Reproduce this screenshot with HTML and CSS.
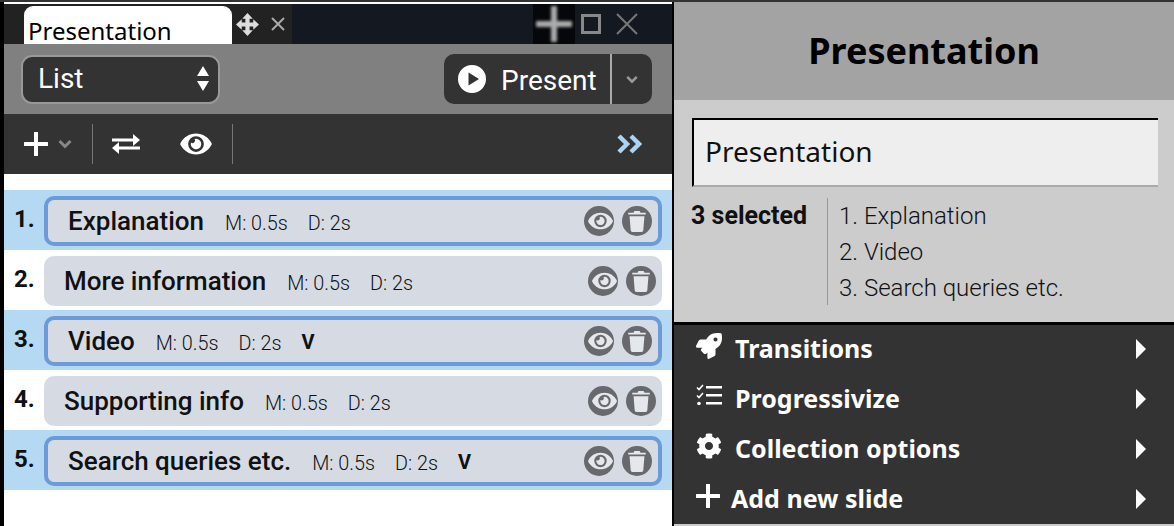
FILE: index.html
```html
<!DOCTYPE html>
<html><head><title>Presentation</title><meta charset="utf-8"><link rel="stylesheet" href="styles.css"></head><body>
<svg class="defs" width="0" height="0">
	<symbol id="eye" viewBox="0 0 576 512"><path d="M572.52 241.4C518.29 135.59 410.93 64 288 64S57.68 135.64 3.48 241.41a32.35 32.35 0 0 0 0 29.19C57.71 376.41 165.07 448 288 448s230.32-71.64 284.52-177.41a32.35 32.35 0 0 0 0-29.19zM288 400a144 144 0 1 1 144-144 143.93 143.93 0 0 1-144 144zm0-240a95.31 95.31 0 0 0-25.31 3.79 47.85 47.85 0 0 1-66.9 66.9A95.78 95.78 0 1 0 288 160z"/></symbol>
	<symbol id="trash" viewBox="0 0 20 24"><path d="M7 0h6l1 2h6v2H0V2h6zM1.500 6h17l-1.300 16a2 2 0 0 1-2 2H4.800a2 2 0 0 1-2-2z"/></symbol>
	<symbol id="chev" viewBox="0 0 14 10"><path d="M1.500 2 7 7.500 12.500 2" fill="none" stroke="currentColor" stroke-width="3"/></symbol>
	<symbol id="plus" viewBox="0 0 24 24"><path d="M10 1a2 2 0 0 1 4 0v9h9a2 2 0 0 1 0 4h-9v9a2 2 0 0 1-4 0v-9H1a2 2 0 0 1 0-4h9z"/></symbol>
	<symbol id="tri" viewBox="0 0 10 20"><path d="M0 0 10 10 0 20z"/></symbol>
</svg>
<div class="app">
	<section class="left">
		<div class="tabbar">
			<div class="tabgroup">
				<div class="tab">Presentation</div>
				<svg class="move" viewBox="0 0 24 24"><path d="M12 0l5.500 6H14.200v3.800H18V6.500l6 5.500-6 5.500v-3.300h-3.800V18h3.300L12 24l-5.500-6h3.300v-3.800H6v3.300L0 12l6-5.500v3.300h3.800V6H6.500z"/></svg>
				<svg class="tabx" viewBox="0 0 14 14"><path d="M1 1l12 12M13 1 1 13" stroke-width="2"/></svg>
			</div>
			<div class="winctl">
				<div class="winplus"><svg><use href="#plus"/></svg></div>
				<div class="winsq"></div>
				<svg class="winx" viewBox="0 0 22 22"><path d="M1 1l20 20M21 1 1 21" stroke-width="2"/></svg>
			</div>
		</div>
		<div class="bar-gray">
			<div class="select">
				<span>List</span>
				<svg viewBox="0 0 12 26"><path d="M6 0l6 10H0zM0 15h12L6 25z"/></svg>
			</div>
			<div class="present">
				<div class="present-main">
					<svg viewBox="0 0 28 28"><path fill-rule="evenodd" d="M14 0a14 14 0 1 1 0 28 14 14 0 0 1 0-28zM10.500 7.500v13L21 14z"/></svg>
					<span>Present</span>
				</div>
				<div class="present-more"><svg><use href="#chev"/></svg></div>
			</div>
		</div>
		<div class="bar-dark">
			<svg class="i-plus"><use href="#plus"/></svg>
			<svg class="i-chev"><use href="#chev"/></svg>
			<div class="sep"></div>
			<svg class="i-swap" viewBox="0 0 28 20"><path d="M0 4.500h21V0l7 6-7 6V7.500H0zM28 12.500H7V8l-7 6 7 6v-4.500h21z"/></svg>
			<svg class="i-eye"><use href="#eye"/></svg>
			<div class="sep"></div>
			<svg class="i-dbl" viewBox="0 0 25 20"><path d="M2 2l8 8-8 8M14 2l8 8-8 8"/></svg>
		</div>
		<div class="list">
			<div class="row sel">
				<div class="num">1.</div>
				<div class="item"><b>Explanation</b><span>M: 0.5s</span><span>D: 2s</span>
					<div class="acts"><i><svg class="e"><use href="#eye"/></svg></i><i><svg class="t"><use href="#trash"/></svg></i></div></div>
			</div>
			<div class="row">
				<div class="num">2.</div>
				<div class="item"><b>More information</b><span>M: 0.5s</span><span>D: 2s</span>
					<div class="acts"><i><svg class="e"><use href="#eye"/></svg></i><i><svg class="t"><use href="#trash"/></svg></i></div></div>
			</div>
			<div class="row sel">
				<div class="num">3.</div>
				<div class="item"><b>Video</b><span>M: 0.5s</span><span>D: 2s</span><em>V</em>
					<div class="acts"><i><svg class="e"><use href="#eye"/></svg></i><i><svg class="t"><use href="#trash"/></svg></i></div></div>
			</div>
			<div class="row">
				<div class="num">4.</div>
				<div class="item"><b>Supporting info</b><span>M: 0.5s</span><span>D: 2s</span>
					<div class="acts"><i><svg class="e"><use href="#eye"/></svg></i><i><svg class="t"><use href="#trash"/></svg></i></div></div>
			</div>
			<div class="row sel">
				<div class="num">5.</div>
				<div class="item"><b>Search queries etc.</b><span>M: 0.5s</span><span>D: 2s</span><em>V</em>
					<div class="acts"><i><svg class="e"><use href="#eye"/></svg></i><i><svg class="t"><use href="#trash"/></svg></i></div></div>
			</div>
		</div>
	</section>
	<aside class="right">
		<h1>Presentation</h1>
		<div class="props">
			<div class="name">Presentation</div>
			<div class="selinfo">
				<div class="count">3 selected</div>
				<ol>
					<li>1. Explanation</li>
					<li>2. Video</li>
					<li>3. Search queries etc.</li>
				</ol>
			</div>
		</div>
		<div class="menu">
			<div class="mrow">
				<svg class="mi" viewBox="0 0 512 512"><path d="M505.12 19.09c-1.19-5.53-6.66-11-12.21-12.18C460.72 0 435.51 0 410.41 0 307.18 0 245.27 55.2 199.05 128H94.84c-16.35.02-35.56 11.88-42.89 26.48L2.52 253.3A28.4 28.4 0 0 0 0 264a24 24 0 0 0 24 24h103.82l-22.48 22.47c-11.36 11.36-13 32.26 0 45.25l50.91 50.91c11.16 11.19 32.16 13.16 45.28 0l22.47-22.47V488a24 24 0 0 0 24 24 28.56 28.56 0 0 0 10.71-2.52l98.73-49.39c14.63-7.3 26.51-26.5 26.51-42.86V312.8c72.6-46.31 128.03-108.41 128.03-211.1.01-25.2.01-50.4-6.95-82.61zM384.04 168a40 40 0 1 1 40.01-40 40.02 40.02 0 0 1-40.01 40z"/></svg>
				<span>Transitions</span><svg class="arrow"><use href="#tri"/></svg>
			</div>
			<div class="mrow">
				<svg class="mi" viewBox="0 0 26 24"><path d="M1 3.500l2 2 4-4.500M1 11.500l2 2 4-4.500" fill="none" stroke="#fff" stroke-width="1.600"/><circle cx="3" cy="19.500" r="1.800"/><path d="M10 2h16v2.500H10zM10 10h16v2.500H10zM10 18h16v2.500H10z"/></svg>
				<span>Progressivize</span><svg class="arrow"><use href="#tri"/></svg>
			</div>
			<div class="mrow">
				<svg class="mi" viewBox="0 0 512 512"><path d="M487.4 315.700l-42.600-24.600c4.300-23.200 4.300-47 0-70.200l42.600-24.600c4.900-2.800 7.100-8.600 5.500-14-11.100-35.600-30-67.800-54.700-94.600-3.800-4.100-10-5.100-14.800-2.300L380.800 110c-17.900-15.400-38.500-27.300-60.800-35.100V25.800c0-5.600-3.900-10.500-9.400-11.700-36.700-8.200-74.300-7.800-109.200 0-5.500 1.200-9.400 6.100-9.400 11.700V75c-22.200 7.900-42.800 19.800-60.800 35.100L88.700 85.500c-4.900-2.800-11-1.900-14.800 2.300-24.700 26.700-43.600 58.900-54.700 94.600-1.700 5.400.6 11.200 5.500 14L67.300 221c-4.300 23.200-4.300 47 0 70.200l-42.600 24.600c-4.900 2.800-7.100 8.600-5.500 14 11.100 35.600 30 67.800 54.700 94.600 3.800 4.100 10 5.100 14.800 2.300l42.600-24.600c17.900 15.400 38.500 27.300 60.800 35.100v49.200c0 5.600 3.900 10.500 9.400 11.700 36.700 8.200 74.300 7.800 109.200 0 5.500-1.200 9.400-6.100 9.400-11.700v-49.200c22.200-7.900 42.800-19.800 60.800-35.100l42.600 24.600c4.900 2.800 11 1.900 14.800-2.300 24.700-26.700 43.600-58.900 54.700-94.600 1.500-5.500-.7-11.300-5.600-14.100zM256 336c-44.100 0-80-35.900-80-80s35.900-80 80-80 80 35.900 80 80-35.900 80-80 80z"/></svg>
				<span>Collection options</span><svg class="arrow"><use href="#tri"/></svg>
			</div>
			<div class="mrow add">
				<svg class="mi"><use href="#plus"/></svg>
				<span>Add new slide</span><svg class="arrow"><use href="#tri"/></svg>
			</div>
		</div>
	</aside>
</div>
</body></html>
```

FILE: styles.css
```css
html, body { margin: 0; height: 100%; overflow: hidden; }
body { background: #000; font-family: "Roboto", sans-serif; }
svg { display: block; fill: currentColor; }
.defs { position: absolute; }
.app { display: grid; grid-template-columns: 668px 500px; column-gap: 2px; height: 526px; box-sizing: border-box; padding-left: 4px; border-top: 2px solid #333; }

/* left panel */
.left { display: flex; flex-direction: column; background: #fff; padding-top: 2px; }
.tabbar { display: flex; height: 40px; background: #141820; }
.tabgroup { display: flex; align-items: center; width: 288px; background: #222; padding-left: 20px; box-sizing: border-box; }
.tab { align-self: flex-end; width: 208px; height: 38px; box-sizing: border-box; padding: 12px 0 0 4px; background: #fff; color: #000;
	border-radius: 9px 9px 0 0; font: 24px/26px "Noto Sans", sans-serif; }
.move { width: 23px; height: 23px; margin-left: 4px; color: #ddd; }
.tabx { width: 14px; height: 14px; margin-left: 12px; stroke: #aaa; fill: none; }
.winctl { display: flex; align-items: center; margin-left: 241px; }
.winplus { width: 42px; height: 40px; background: #05070a; display: flex; align-items: center; justify-content: center; color: #aaa; }
.winplus svg { width: 36px; height: 36px; filter: blur(1.5px); }
.winsq { width: 20px; height: 20px; box-sizing: border-box; border: 3px solid #888; margin-left: 6px; }
.winx { width: 22px; height: 22px; margin-left: 15px; stroke: #777; fill: none; }

.bar-gray { display: flex; justify-content: space-between; align-items: center; height: 70px; background: #808080; padding: 0 20px 0 17px; }
.select { display: flex; align-items: center; justify-content: space-between; width: 199px; height: 49px; box-sizing: border-box; padding: 0 9px 0 15px;
	background: #333; border: 2px solid #999; border-radius: 11px; color: #fff; font-size: 28px; }
.select span { position: relative; top: -1px; }
.select svg { width: 12px; height: 26px; }
.present { display: flex; height: 50px; width: 208px; background: #333; border-radius: 10px; color: #fff; font-size: 28px; }
.present-main { display: flex; align-items: center; width: 168px; padding-left: 14px; box-sizing: border-box; border-right: 2px solid #aaa; }
.present-main span { position: relative; top: 1px; }
.present-main svg { width: 28px; height: 28px; margin-right: 15px; }
.present-more { flex: 1; display: flex; align-items: center; justify-content: center; color: #999; }
.present-more svg { width: 12px; height: 9px; }

.bar-dark { display: flex; align-items: center; height: 60px; background: #333; color: #fff; padding-left: 20px; }
.i-plus { width: 24px; height: 24px; }
.i-chev { width: 14px; height: 10px; margin-left: 10px; color: #888; }
.sep { width: 1px; height: 40px; background: #777; }
.bar-dark .sep { margin-left: 20px; }
.i-swap { width: 28px; height: 20px; margin-left: 19px; }
.i-eye { width: 32px; height: 28px; margin-left: 40px; }
.i-dbl { width: 25px; height: 20px; margin-left: auto; margin-right: 30px; fill: none; stroke: #a9d5f2; stroke-width: 4.500px; }

.list { padding-top: 16px; }
.row { display: flex; align-items: center; height: 60px; box-sizing: border-box; padding-top: 2px; }
.row.sel { background: #b6d9f3; }
.num { width: 40px; padding-left: 10px; box-sizing: border-box; font-weight: 700; font-size: 24px; color: #111; position: relative; top: -2px; }
.item { display: flex; align-items: center; width: 618px; height: 50px; box-sizing: border-box; padding: 0 6px 0 20px; background: #d6dbe3; border-radius: 10px; color: #111; }
.sel .item { border: 4px solid #6b9bd8; }
.item b { font-weight: 500; font-size: 26px; margin-right: 21px; }
.item span { font-weight: 300; font-size: 19.800px; margin-right: 20px; position: relative; top: 2px; }
.item span + span { margin-right: 20px; }
.item em { font-style: normal; font-weight: 700; font-size: 20px; position: relative; top: 1px; }
.acts { display: flex; gap: 8px; margin-left: auto; }
.acts i { display: flex; align-items: center; justify-content: center; width: 30px; height: 30px; border-radius: 50%; background: #67696d; color: #e4e7ec; }
.acts .e { width: 25px; height: 22px; margin-left: 2px; }
.acts .t { width: 18px; height: 21px; }

/* right panel */
.right { display: flex; flex-direction: column; background: #ccc; }
.right h1 { margin: 0; height: 98px; text-align: center; background: #a3a3a3; color: #000; font: 700 36px/98px "Noto Sans", sans-serif; }
.props { height: 222px; box-sizing: border-box; padding: 18px 16px 0 18px; }
.name { height: 69px; box-sizing: border-box; padding-left: 11px; font: 28px/63px "Noto Sans", sans-serif; color: #111; background: #eee;
	border-top: 2px solid #000; border-left: 2px solid #000; border-bottom: 2px solid #aaa; }
.selinfo { display: flex; margin-top: 11px; }
.count { width: 136px; font-weight: 700; font-size: 25px; line-height: 36px; color: #111; margin-left: -1px; }
.selinfo ol { list-style: none; margin: 0; padding: 0 0 0 11px; border-left: 1px solid #999; height: 107px; font-weight: 300; font-size: 24px; line-height: 36px; color: #111; }
.menu { flex: 1; margin-bottom: 2px; border-top: 3px solid #000; background: #333; color: #fff; }
.mrow { display: flex; align-items: center; height: 50px; box-sizing: border-box; padding: 0 0 2px 22px; font: 700 25px "Noto Sans", sans-serif; }
.mrow span { position: relative; top: -1px; }
.mrow .mi { width: 26px; height: 26px; margin-right: 13px; position: relative; top: -3px; }
.mrow.add { height: 49px; padding-bottom: 1px; }
.mrow.add .mi { width: 24px; height: 24px; margin-right: 11px; }
.arrow { width: 10px; height: 20px; margin-left: auto; margin-right: 28px; }
```
